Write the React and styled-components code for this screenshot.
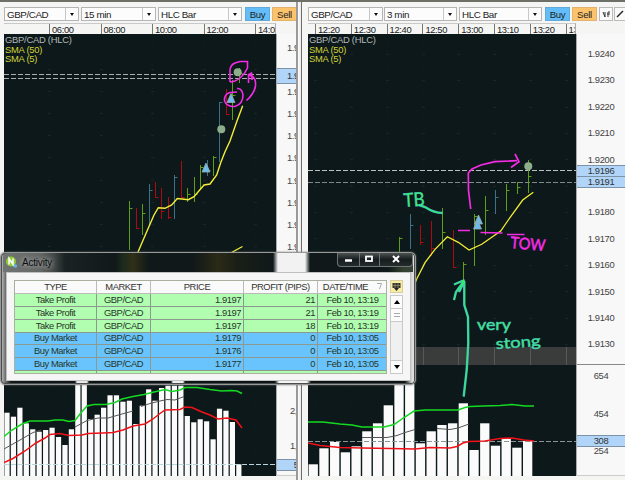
import React from "react";
import styled, { createGlobalStyle, css } from "styled-components";

const GlobalStyle = createGlobalStyle`
    body{
        margin: 0;
        background-color: #f5f5f3;
        font-family: "Liberation Sans", Arial, sans-serif;
        font-size: 9.4px;
        letter-spacing: -0.35px;
        color: #222;
    }
    *{
        box-sizing: border-box;
    }
`

const Screen = styled.div`
    position: relative;
    width: 625px;
    height: 480px;
    display: flex;
    overflow: hidden;
    background-color: #f7f7f6;
    border-top: 2px solid #6d7066;
`
const Panel = styled.section`
    width: ${p => p.$width}px;
    padding-left: ${p => p.$inset}px;
    flex-shrink: 0;
    overflow: hidden;
    background-color: #f5f5f4;
`
const Splitter = styled.div`
    width: 6px;
    flex-shrink: 0;
    border-right: 1px solid #6f6f6f;
    background: linear-gradient(90deg, #9a9a9a 0, #9a9a9a 2px, #fdfdfd 2px, #e9e9e9 5px);
`
const Toolbar = styled.div`
    height: 21px;
    padding-top: 5px;
    display: flex;
`
const Combo = styled.div`
    display: flex;
    align-items: center;
    flex-shrink: 0;
    width: ${p => p.$width}px;
    height: 14px;
    margin-right: ${p => p.$gap || 2}px;
    padding-left: 2px;
    border: 1px solid #b5b5b5;
    background-color: #fcfcfc;
    font-size: 9.8px;
    letter-spacing: -0.4px;
    span{
        flex: 1;
    }
    i{
        width: 13px;
        height: 12px;
        display: flex;
        align-items: center;
        justify-content: center;
        border-left: 1px solid #c8c8c8;
    }
    i::after{
        content: "";
        border: 2.5px solid transparent;
        border-top: 3px solid #111;
        border-bottom: 0;
    }
`
const TradeButton = styled.button`
    width: 25px;
    height: 14px;
    flex-shrink: 0;
    margin: 0 2px 0 0;
    padding: 0;
    border: 1px solid ${p => p.$sell ? "#e2b36c" : "#62aada"};
    background-color: ${p => p.$sell ? "#fdc36c" : "#62bdf8"};
    color: #222;
    font: 9.6px "Liberation Sans", Arial, sans-serif;
    letter-spacing: -0.3px;
`
const ToolIcon = styled.div`
    width: 14px;
    height: 14px;
    flex-shrink: 0;
    margin-right: 1px;
    border: 1px solid #bbb;
    background-color: #fafafa;
    svg{
        display: block;
    }
`
const TimeAxis = styled.div`
    display: flex;
    height: 11px;
    width: ${p => p.$width}px;
    padding-left: ${p => p.$start}px;
    overflow: hidden;
    border-top: 1px solid #c9c9c9;
    border-right: 1px solid #aaa;
    span{
        flex: 0 0 ${p => p.$step}px;
        padding-left: 2px;
        line-height: 11px;
        border-left: 1px solid #777;
    }
`
const ChartRow = styled.div`
    display: flex;
    height: 442px;
    border-bottom: 1px solid #ccc;
`
const Plot = styled.div`
    position: relative;
    flex-shrink: 0;
    height: 442px;
    background-color: #0c1819;
    svg{
        display: block;
    }
`
const Legend = styled.div`
    position: absolute;
    top: 1px;
    left: 1px;
    line-height: 9.5px;
    white-space: nowrap;
    color: #d2d23c;
    letter-spacing: -0.25px;
    b{
        font-weight: normal;
        color: #b4b8b8;
    }
    div{
        height: 9.5px;
    }
`
const Axis = styled.div`
    position: relative;
    flex: 1;
    overflow: hidden;
    border-left: 1px solid #aaa;
    background-color: #f8f8f8;
    color: #444;
    text-align: ${p => p.$clipped ? "left" : "center"};
    padding-left: ${p => p.$clipped ? 10 : 0}px;
`
const Prices = styled.div`
    height: ${p => p.$height}px;
    padding-top: ${p => p.$top}px;
    overflow: hidden;
    border-bottom: 1px solid ${p => p.$line ? "#888" : "transparent"};
    div{
        height: ${p => p.$step}px;
        line-height: ${p => p.$step}px;
    }
`
const Volumes = styled.div`
    display: flex;
    flex-direction: column;
    gap: ${p => p.$gap}px;
    padding-top: ${p => p.$top}px;
    padding-left: ${p => p.$shift || 0}px;
    line-height: 12px;
`
// current value laid over the axis scale
const AxisTag = styled.div`
    position: absolute;
    left: 0;
    right: 0;
    top: ${p => p.$top}px;
    height: ${p => p.$height || 12}px;
    line-height: ${p => (p.$height || 12) - 2}px;
    padding-left: inherit;
    border-top: 1px solid #7e93a8;
    border-bottom: 1px solid #7e93a8;
    background-color: #b0d5f9;
    color: #333;
`

const Window = styled.div`
    position: absolute;
    left: 0;
    top: 250px;
    width: 416px;
    height: 133px;
    padding: 0 4px 4px 5px;
    border: 1px solid #999;
    border-radius: 5px;
    box-shadow: inset 0 0 0 1px #4b4e4c, 0 0 2px #777;
    background: linear-gradient(90deg, #c5c5c5 0, #777 4px, #101819 10px, #0f1719 74px, #e8e8e8 76px, #e8e8e8 86px, #0c1415 88px, #0c1415 170px, #eee 172px, #eee 182px, #0c1415 184px, #0c1415 274px, #f4f4f4 278px, #f4f4f4 306px, #0c1415 310px, #0c1415 404px, #ddd 411px);
`
const TitleBar = styled.div`
    display: flex;
    height: 19px;
    margin: 0 -2px 0 -3px;
    padding-left: 2px;
    border-radius: 4px 4px 0 0;
    background: linear-gradient(90deg, #707473 0, #626766 38px, #454a49 50px, #1b2223 62px, #101819 112px, #1c2a1c 120px, #303017 130px, #101819 146px, #101819 190px, #2b2a17 215px, #191f17 235px, #101819 270px, #f2f2f2 275px, #f2f2f2 302px, #101819 307px, #101819 385px, #33402f 400px, #344239 412px);
`
const Title = styled.h1`
    flex: 1;
    margin: 0;
    padding: 4px 0 0 4px;
    font-size: 10px;
    letter-spacing: -0.2px;
    line-height: 11px;
    font-weight: normal;
    color: #0b0f0f;
    text-shadow: 0 0 4px #aaa, 0 0 6px #999, 0 0 9px #888;
`
const WindowButtons = styled.div`
    display: flex;
    height: 14px;
    border: 1px solid #6e7473;
    border-top: 0;
    border-radius: 0 0 4px 4px;
    background: linear-gradient(#4d5251, #171d1e 50%, #242b2b);
    svg + svg{
        border-left: 1px solid #6e7473;
    }
`
const Content = styled.div`
    display: flex;
    height: 109px;
    padding: 7px 7px 6px 7px;
    border: 1px solid #c0c0c0;
    background-color: #f6f6f6;
`
const TableBox = styled.div`
    width: 374px;
    height: 94px;
    overflow: hidden;
    border: 1px solid #a9b09f;
`
const Row = styled.div`
    display: grid;
    grid-template-columns: 82px 54px 93px 74px 70px;
    height: 12.85px;
    line-height: 12px;
    text-align: center;
    letter-spacing: -0.45px;
    color: #263628;
    background-color: ${p => p.$color};
    div{
        border-right: 1px solid #8d998f;
        border-bottom: 1px solid #8d998f;
        white-space: nowrap;
    }
    ${p => p.$head ? css`
        color: #333;
        div{
            border-color: #bbb;
        }
    ` : css`
        div:nth-child(3), div:nth-child(4){
            text-align: right;
            padding-right: 2px;
        }
    `}
    svg{
        vertical-align: 0;
        margin-left: 9px;
    }
`
const ScrollColumn = styled.div`
    display: flex;
    flex-direction: column;
    width: 13px;
    height: 94px;
    margin-left: 3px;
`
const ColumnPicker = styled.div`
    height: 13px;
    margin-bottom: 2px;
    background-color: #f8eba5;
    border: 1px solid #d8cf9a;
    svg{
        display: block;
    }
`
const ScrollBar = styled.div`
    flex: 1;
    display: flex;
    flex-direction: column;
    border: 1px solid #c9c9c9;
    background-color: #f0f0f0;
    div{
        height: 13px;
        display: flex;
        align-items: center;
        justify-content: center;
        background-color: #fcfcfc;
        border-bottom: 1px solid #c9c9c9;
    }
    div:last-child{
        margin-top: auto;
        border-top: 1px solid #c9c9c9;
        border-bottom: 0;
    }
`
const Note = styled.text`
    font-family: Lato, "Liberation Sans", sans-serif;
    font-size: ${p => p.$size}px;
    font-weight: 400;
    letter-spacing: 0;
    fill: ${p => p.$color};
    stroke: ${p => p.$edge};
    stroke-width: 0.5px;
`

const GREEN = "#5f9f14";
const RED = "#ad0b10";
const BLUE = "#3d7187";

// x, high, low, close, color
const leftBars = [
    [129.5, 201, 250, 208, GREEN],
    [136.5, 208, 229, 228, RED],
    [142.5, 204, 235, 213, GREEN],
    [149.5, 184, 226, 190, BLUE],
    [155.5, 182, 198, 197, RED],
    [161.5, 188, 219, 211, RED],
    [168.5, 197, 219, 217, RED],
    [174.5, 175, 219, 177, BLUE],
    [181.5, 161, 198, 197, RED],
    [187.5, 188, 202, 194, GREEN],
    [194.5, 177, 202, 194, GREEN],
    [200.5, 165, 189, 167, GREEN],
    [207.5, 160, 176, 170, BLUE],
    [213.5, 156, 176, 157, GREEN],
    [219.5, 102, 162, 102, BLUE],
    [226.5, 89, 115, 114, RED],
    [232.5, 80, 120, 95, GREEN],
    [239.5, 68, 83, 73, GREEN],
];
const rightBars = [
    [399.5, 237, 254, 238, GREEN],
    [410.5, 214, 249, 225, BLUE],
    [420.5, 225, 245, 242, RED],
    [431.5, 221, 256, 248, RED],
    [442.5, 208, 249, 232, GREEN],
    [453.5, 230, 268, 267, RED],
    [463.5, 262, 280, 264, GREEN],
    [474.5, 214, 266, 216, GREEN],
    [485.5, 196, 235, 210, GREEN],
    [495.5, 190, 214, 197, BLUE],
    [506.5, 184, 211, 190, GREEN],
    [517.5, 182, 194, 187, GREEN],
    [528.5, 160, 193, 176, GREEN],
];

const leftVolume = [412.7, 416.7, 407.7, 423.3, 429.3, 431.7, 430, 427.7, 437, 445, 429.3, 385, 385, 419, 414.7, 407.7, 395.3, 395.3, 401.7, 400.7, 424, 405.7, 389.3, 400.7, 388, 385.7, 385.7, 385.7, 416, 422.3, 419.3, 421.3, 439.3, 408.7, 410.7, 422, 464.3];
const rightVolume = [464.3, 448.3, 442, 452.3, 446.3, 431.3, 423.3, 405.3, 384, 384, 443.3, 431.3, 425, 423.3, 403.3, 450, 423.3, 445.7, 438.3, 447.7, 441];

const timesLeft = ["06:00", "08:00", "10:00", "12:00", "14:00"];
const timesRight = ["12:20", "12:30", "12:40", "12:50", "13:00", "13:10", "13:20", "13:30"];
// the blank step is covered by the current price tags
const pricesRight = ["1.9240", "1.9230", "1.9220", "1.9210", "1.9200", "", "1.9180", "1.9170", "1.9160", "1.9150", "1.9140", "1.9130"];
const pricesLeft = ["1.9210", "", "1.9190", "1.9180", "1.9170", "1.9160", "1.9150", "1.9140", "1.9130", "1.9120"];

const activity = [
    ["Take Profit", "GBP/CAD", "1.9197", "21", "Feb 10, 13:19"],
    ["Take Profit", "GBP/CAD", "1.9197", "21", "Feb 10, 13:19"],
    ["Take Profit", "GBP/CAD", "1.9197", "18", "Feb 10, 13:19"],
    ["Buy Market", "GBP/CAD", "1.9179", "0", "Feb 10, 13:05"],
    ["Buy Market", "GBP/CAD", "1.9176", "0", "Feb 10, 13:05"],
    ["Buy Market", "GBP/CAD", "1.9177", "0", "Feb 10, 13:05"],
    ["", "", "", "", ""],
];

const HlcBars = ({ data }) => data.map(([x, high, low, close, color]) => (
    <path key={x} d={`M${x} ${high}V${low}M${x} ${close + 0.5}h3`} stroke={color} fill="none" />
));

const Volume = ({ data, start, step, width }) => data.map((top, i) => (
    <rect key={i} x={start + i * step} y={top} width={width} height={476 - top} fill="#fbfbfb" />
));

const Grid = ({ xs, ys }) => xs.map(x => (
    <g key={x} stroke="#1a2626">
        <path d={`M${x}.5 34V476`} strokeDasharray="1 5" opacity=".5" />
        {ys.map(y => <path key={y} d={`M${x - 1} ${y}.5h3`} />)}
    </g>
));

const BuyMark = ({ x, y }) => (
    <path d={`M${x} ${y - 5}L${x + 4} ${y + 4}H${x - 4}Z`} fill="#6bbdf0" stroke="#9aa9ad" strokeWidth=".8" />
);

const ExitMark = ({ x, y }) => <circle cx={x} cy={y} r="4" fill="#8cae8a" />;

// green pen line with a cyan edge
const Pen = ({ d }) => (
    <g fill="none">
        <path d={d} stroke="#46b8d6" strokeWidth="2.4" />
        <path d={d} stroke="#34f05c" strokeWidth="1.1" />
    </g>
);

const LeftChart = () => (
    <svg width="272" height="442" viewBox="4 34 272 442">
        <Grid xs={[49, 101, 152, 204, 255]} ys={[69, 91, 113, 135, 157, 180, 202, 224, 246]} />
        <g stroke="#a9afb0" strokeDasharray="5 2">
            <path d="M4 74.5H276" />
            <path d="M4 78.5H276" />
        </g>
        <HlcBars data={leftBars} />
        <g fill="none" stroke="#f4ee36" strokeWidth="1.4">
            <path d="M138 252L149.3 225.7 154 215 158.3 207.7 165 208.3 171.7 205 177.3 198.5 182 199 188.3 199.7 194 196.7 204 185 210 184 216.7 175 220.7 162.7 225 151.7 230 141 236.7 121.7 242.7 105.7" />
            <path d="M225 256L242.5 246.5" />
        </g>
        <BuyMark x={206} y={168} />
        <BuyMark x={231} y={98.5} />
        <ExitMark x={221.3} y={129.3} />
        <ExitMark x={237.7} y={72.2} />
        <g fill="none" stroke="#f62be6" strokeWidth="1.6">
            <path d="M230 82V71Q230 65 235 63L240 61.5H247.5V68Q245 74 240 78Q235 82 230 82" />
            <path d="M237 88.5Q242 88 243 95Q243 104 235 106.5Q227 107 224.5 101Q224 94 230 92.5L237 92" />
            <path d="M246.5 100.5Q254 94 255.5 86Q256 78 252 76L248.5 75V83M248 75L251.5 73L252 80" />
        </g>
        <Volume data={leftVolume} start={4.4} step={6.44} width={5.2} />
        <path d="M4 464.5H276" stroke="#b8d6dc" strokeDasharray="5 2" />
        <g fill="none" strokeWidth="1.5">
            <path d="M4 449L20 440 33 432.5 41 430M75 427L87 420.5 98 418 108 418 122 414 133 411M141 406.5L150 403.5 160 401 167 399.5 175 400 184 396.5" stroke="#555" strokeWidth="1" />
            <path d="M4 436.5L12 430 22 424 30 421 48 421 55 420 63 420 69 421.5 75 420.5 80 414 87 406 94 404.5 106 404.5 115 402.5 122 399 133 396.5 144 394.5 154 392 165 389.5 172 391.5 180 390 185 387.5 197 387.5 210 389.5 222 391 231 390.5 237 391 242 393.5" stroke="#14d922" />
            <path d="M4 462.5L13 458.5 25 451 36 443 45 438 50 434.5 60 433.5 69 435.5 82 435 88 433.5 103 433 113 432.5 123 430 133 426 145 424 153 419 160 413.5 165 410 180 409.5 185 407 192 407.5 202 412 210 415 218 419 227 418 236 420 242 428" stroke="#f01218" />
        </g>
    </svg>
);

const RightChart = () => (
    <svg width="268" height="442" viewBox="308 34 268 442">
        <rect x="308" y="347" width="268" height="18" fill="#393c3b" />
        <Grid xs={[315, 351, 387, 423, 458, 494, 530, 566]} ys={[54, 80, 107, 133, 159, 186, 212, 238, 265, 291, 318, 344]} />
        <path d="M423.5 347v18M458.5 347v18M494.5 347v18M530.5 347v18M566.5 347v18" stroke="#565959" />
        <path d="M308 170.5H576" stroke="#bcc1c1" strokeDasharray="5 2" />
        <path d="M308 182.5H576" stroke="#80898a" strokeDasharray="5 2" />
        <HlcBars data={rightBars} />
        <path d="M414 286L416.7 279 425 262.7 435 249.3 447.3 236.7 458.3 242.3 469 250 481.7 244.3 500.7 231 508.3 220 522.7 200 533.3 192.3" fill="none" stroke="#f4ee36" strokeWidth="1.3" />
        <BuyMark x={478.5} y={220} />
        <BuyMark x={477.5} y={225} />
        <ExitMark x={528.3} y={166.3} />

        <Volume data={rightVolume} start={308.6} step={10.72} width={9.3} />
        <path d="M308 441.5H576" stroke="#8b9494" strokeDasharray="5 2" />
        <g fill="none" strokeWidth="1.5">
            <path d="M362 437.5H387L397 435.5 405 432.5 415 429.5M437 428.5L450 429.5 458 428 469 424" stroke="#555" strokeWidth="1" />
            <path d="M308 422H323L340 424 352 425 362 427H384L394 424.5 404 417.5 414 411 425 410H458L465 407.5 470 406.5 483 406 500 405.5 512 404.5 525 406H534" stroke="#14d922" />
            <path d="M308 443L320 445.5 340 447.5 362 448 390 448.5 415 449 430 447.5 450 448 457 446.5 463 443 469 441.5 485 441 500 438.5 512 438 524 440 534 441" stroke="#f01218" />
        </g>

        <g fill="none" stroke="#f62be6" strokeWidth="1.7">
            <path d="M470.7 209L468.5 190 468.3 173 472 169 481 165 495 161.7 517 160.7M515 154L519 161.7 511 167.5" />
            <path d="M458 230.5H470M480.5 232.5L502.5 233M507 234.5H524.5" />
        </g>
        <Note x="510" y="248" $size={16} $color="#f62be6" $edge="#f62be6" textLength="35" lengthAdjust="spacingAndGlyphs" transform="rotate(5 510 248)">TOW</Note>
        <Pen d="M419 205L425 207Q434 213 442.7 213" />
        <Pen d="M463.7 396.5L466.7 370 468.3 343 468 317 464.3 305V281M454 284.5L464.5 280M454 300L456 292 464 281M459 292L463.5 283" />
        <Note x="404" y="207" $size={19} $color="#38f64c" $edge="#4cc8d8" textLength="21" lengthAdjust="spacingAndGlyphs" transform="rotate(-4 404 207)">TB</Note>
        <Note x="477" y="330" $size={15} $color="#38f64c" $edge="#4cc8d8" textLength="34" lengthAdjust="spacingAndGlyphs">very</Note>
        <Note x="496" y="349" $size={15} $color="#38f64c" $edge="#4cc8d8" textLength="45" lengthAdjust="spacingAndGlyphs" transform="rotate(-4 496 349)">stong</Note>
    </svg>
);

const Indicators = () => (
    <Legend>
        <div><b>GBP/CAD (HLC)</b></div>
        <div>SMA (50)</div>
        <div>SMA (5)</div>
    </Legend>
);

const ActivityWindow = () => (
    <Window>
        <TitleBar>
            <svg width="13" height="18" viewBox="0 0 13 18">
                <circle cx="6" cy="8.5" r="5" fill="#8fca37" />
                <path d="M4 11.500V5.500L8 11.500V5.500" stroke="#fff" strokeWidth="1.5" fill="none" />
                <circle cx="10.5" cy="13" r="1.7" fill="#5bb8f0" />
            </svg>
            <Title>Activity</Title>
            <WindowButtons>
                <svg width="21" height="13"><path d="M7 7.5h7" stroke="#fff" strokeWidth="2.5" /></svg>
                <svg width="20" height="13"><rect x="6" y="3.5" width="6" height="4.5" stroke="#fff" strokeWidth="1.8" fill="none" /></svg>
                <svg width="33" height="13"><path d="M13 3l6 6M19 3l-6 6" stroke="#fff" strokeWidth="2" /></svg>
            </WindowButtons>
        </TitleBar>
        <Content>
            <TableBox>
                <Row $head $color="#fafafa">
                    <div>TYPE</div>
                    <div>MARKET</div>
                    <div>PRICE</div>
                    <div>PROFIT (PIPS)</div>
                    <div>DATE/TIME<svg width="5" height="7"><path d="M0 .5h4.500L2.500 6" stroke="#aaa" fill="none" /></svg></div>
                </Row>
                {activity.map((row, i) => (
                    <Row key={i} $color={i > 2 && i < 6 ? "#69c4fd" : "#b1feb0"}>
                        {row.map((cell, j) => <div key={j}>{cell}</div>)}
                    </Row>
                ))}
            </TableBox>
            <ScrollColumn>
                <ColumnPicker>
                    <svg width="11" height="11">
                        <path d="M1.5 2h8v5h-8z" fill="#33342a" />
                        <path d="M2 4.500h7M4 2v5M7 2v5" stroke="#a8a583" strokeWidth=".6" />
                        <path d="M3 7h5l-2.500 3z" fill="#222" />
                    </svg>
                </ColumnPicker>
                <ScrollBar>
                    <div><svg width="6" height="4"><path d="M0 4h6L3 0z" /></svg></div>
                    <div><svg width="6" height="6"><path d="M0 1.500h6M0 4.500h6" stroke="#aaa" /></svg></div>
                    <div><svg width="6" height="4"><path d="M0 0h6L3 4z" /></svg></div>
                </ScrollBar>
            </ScrollColumn>
        </Content>
    </Window>
);

const App = () => {
    return(
        <>
            <GlobalStyle/>
            <Screen>
                <Panel $width={296} $inset={4}>
                    <Toolbar>
                        <Combo $width={75}><span>GBP/CAD</span><i/></Combo>
                        <Combo $width={75}><span>15 min</span><i/></Combo>
                        <Combo $width={84} $gap={3}><span>HLC Bar</span><i/></Combo>
                        <TradeButton>Buy</TradeButton>
                        <TradeButton $sell>Sell</TradeButton>
                    </Toolbar>
                    <TimeAxis $width={272} $start={45} $step={51.5}>
                        {timesLeft.map(t => <span key={t}>{t}</span>)}
                    </TimeAxis>
                    <ChartRow>
                        <Plot>
                            <LeftChart/>
                            <Indicators/>
                        </Plot>
                        <Axis $clipped>
                            <Prices $height={331} $top={3} $step={22.1}>
                                {pricesLeft.map((p, i) => <div key={i}>{p}</div>)}
                            </Prices>
                            <Volumes $top={40} $gap={23} $shift={3}>
                                <div>2,000</div>
                                <div>1,000</div>
                            </Volumes>
                            <AxisTag $top={34} $height={16}>1.9197</AxisTag>
                            <AxisTag $top={425}>&nbsp;&nbsp;&nbsp;519</AxisTag>
                        </Axis>
                    </ChartRow>
                </Panel>
                <Splitter/>
                <Panel $width={323} $inset={6}>
                    <Toolbar>
                        <Combo $width={75} $gap={1}><span>GBP/CAD</span><i/></Combo>
                        <Combo $width={73}><span>3 min</span><i/></Combo>
                        <Combo $width={83} $gap={3}><span>HLC Bar</span><i/></Combo>
                        <TradeButton>Buy</TradeButton>
                        <TradeButton $sell>Sell</TradeButton>
                        <ToolIcon>
                            <svg width="12" height="12"><path d="M3 4l2 5V4M8 9V4h2M7 6h3" stroke="#333" fill="none" /></svg>
                        </ToolIcon>
                        <ToolIcon>
                            <svg width="12" height="12"><path d="M2 9l6-6" stroke="#222" strokeWidth="1.4" /></svg>
                        </ToolIcon>
                    </Toolbar>
                    <TimeAxis $width={268} $start={7} $step={35.8}>
                        {timesRight.map(t => <span key={t}>{t}</span>)}
                    </TimeAxis>
                    <ChartRow>
                        <Plot>
                            <RightChart/>
                            <Indicators/>
                        </Plot>
                        <Axis>
                            <Prices $height={331} $top={7} $step={26.4} $line>
                                {pricesRight.map((p, i) => <div key={i}>{p}</div>)}
                            </Prices>
                            <Volumes $top={5} $gap={25.5}>
                                <div>654</div>
                                <div>454</div>
                                <div>254</div>
                            </Volumes>
                            <AxisTag $top={131}>1.9196</AxisTag>
                            <AxisTag $top={142}>1.9191</AxisTag>
                            <AxisTag $top={401}>308</AxisTag>
                        </Axis>
                    </ChartRow>
                </Panel>
                <ActivityWindow/>
            </Screen>
        </>
    )
}

export default App;
